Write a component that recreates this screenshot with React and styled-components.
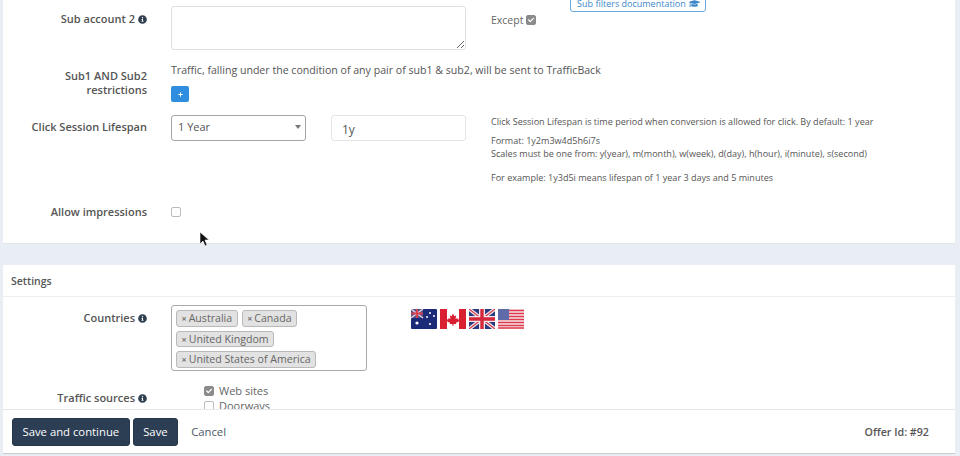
import React from "react";
import styled, { createGlobalStyle } from "styled-components";
import { FaInfoCircle, FaGraduationCap, FaCheck, FaPlus } from "react-icons/fa";

const Global = createGlobalStyle`
  html, body { margin: 0; padding: 0; background: #e9edf4; }
  * { box-sizing: border-box; }
  body { font-family: "Open Sans", "Liberation Sans", sans-serif; color: #555; }
`;

const Page = styled.div`
  width: 960px;
  height: 456px;
  overflow: hidden;
  position: relative;
  display: flex;
  flex-direction: column;
  padding: 0 5px 2px 3px;
  background: #e9edf4;
`;

const Scroll = styled.div`
  flex: 1;
  min-height: 0;
  overflow: hidden;
`;

const Card = styled.section`
  background: #fff;
  border-bottom: 1px solid #e2e5ea;
  height: ${(p) => p.$height}px;
  padding-top: ${(p) => p.$top || 0}px;
  margin-bottom: 21px;
`;

const Row = styled.div`
  display: grid;
  grid-template-columns: 144px 1fr;
  column-gap: 24px;
  margin-top: ${(p) => p.$mt || 0}px;
`;

const Label = styled.div`
  font-size: 11px;
  font-weight: 600;
  line-height: 14px;
  color: #555;
  text-align: right;
  padding-top: ${(p) => p.$pt || 0}px;
  svg { font-size: 9px; color: #2f3f4f; vertical-align: -1px; margin-left: 3px; }
`;

const Control = styled.div`
  display: flex;
  align-items: flex-start;
  min-width: 0;
`;

const Stack = styled.div`
  display: flex;
  flex-direction: column;
  align-items: flex-start;
`;

const TextArea = styled.textarea`
  width: 295px;
  height: 44px;
  border: 1px solid #e0e0e0;
  border-radius: 3px;
  background: #fff;
  display: block;
  outline: none;
`;

const Except = styled.div`
  display: flex;
  align-items: center;
  gap: 3px;
  margin: 8px 0 0 25px;
  font-size: 10.5px;
  line-height: 12px;
  color: #666;
`;

const DocButton = styled.a`
  display: flex;
  align-items: center;
  justify-content: center;
  gap: 3px;
  width: 136px;
  height: 18px;
  margin: -12px 0 0 34px;
  border: 1px solid #6ba6dc;
  border-radius: 3px;
  color: #3d87c9;
  font-size: 9px;
  white-space: nowrap;
  svg { font-size: 11px; flex: none; }
`;

const Note = styled.div`
  font-size: 10.6px;
  line-height: 14px;
  margin-top: 1px;
  color: #555;
`;

const PlusButton = styled.button`
  width: 18px;
  height: 16px;
  margin-top: 9px;
  padding: 0;
  border: 0;
  border-radius: 2px;
  background: #2f8ee0;
  color: #fff;
  display: flex;
  align-items: center;
  justify-content: center;
  svg { font-size: 5px; }
`;

const SelectBox = styled.div`
  position: relative;
  width: 135px;
  height: 26px;
  border: 1px solid #a5a5a5;
  border-radius: 3px;
  padding-left: 6px;
  font-size: 11px;
  line-height: 22px;
  color: #555;
  &::after {
    content: "";
    position: absolute;
    right: 4px;
    top: 9px;
    border-left: 3.5px solid transparent;
    border-right: 3.5px solid transparent;
    border-top: 4px solid #777;
  }
`;

const TextInput = styled.div`
  width: 135px;
  height: 26px;
  margin-left: 25px;
  border: 1px solid #e4e4e4;
  border-radius: 3px;
  padding-left: 10px;
  font-size: 12px;
  line-height: 28px;
  color: #555;
`;

const Help = styled.div`
  margin-left: 25px;
  font-size: 9.05px;
  color: #555;
  line-height: 13px;
  p { margin: 0 0 6px; white-space: nowrap; }
  p:nth-child(2) { margin-bottom: 11px; }
  p:last-child { margin: 0; }
`;

const Box = styled.span`
  width: 10px;
  height: 10px;
  flex: none;
  margin-top: ${(p) => p.$mt || 0}px;
  border-radius: 2px;
  display: inline-flex;
  align-items: center;
  justify-content: center;
  border: 1px solid ${(p) => (p.$checked ? "#8b8b8b" : "#bcbcbc")};
  background: ${(p) => (p.$checked ? "#8b8b8b" : "#fff")};
  color: #fff;
  svg { font-size: 6px; }
`;

const Check = ({ checked, mt }) => (
  <Box $checked={checked} $mt={mt}>
    {checked && <FaCheck />}
  </Box>
);

const CardTitle = styled.div`
  height: 32px;
  padding-left: 8px;
  border-bottom: 1px solid #eceef1;
  font-size: 10.5px;
  font-weight: 600;
  line-height: 32px;
  color: #555;
`;

const TagBox = styled.div`
  width: 196px;
  height: 66px;
  border: 1px solid #aaa;
  border-radius: 3px;
  padding: 4px 4px 0 4px;
  display: flex;
  flex-wrap: wrap;
  align-content: flex-start;
  gap: 4px;
`;

const Tag = styled.span`
  height: 16.5px;
  padding: 0 4.5px;
  border: 1px solid #b9b9b9;
  border-radius: 3px;
  background: #e2e2e2;
  font-size: 10.6px;
  line-height: 15px;
  color: #666;
  white-space: nowrap;
  b { font-weight: 700; font-size: 9px; margin-right: 2px; color: #777; }
`;

const Flags = styled.div`
  display: flex;
  gap: 3px;
  margin: 4px 0 0 44px;
  svg { display: block; width: 26px; height: 20px; }
`;

const Options = styled.div`
  display: flex;
  flex-direction: column;
  margin: -1px 0 0 33px;
`;

const Option = styled.label`
  display: flex;
  align-items: center;
  gap: 5px;
  font-size: 11px;
  line-height: 15px;
  color: #666;
`;

const Footer = styled.footer`
  flex: none;
  height: 45px;
  background: #fff;
  border-top: 1px solid #e6e8ec;
  border-bottom: 1px solid #c9cbcf;
  display: flex;
  align-items: center;
  padding: 0 26px 0 9px;
  gap: 3px;
`;

const SaveButton = styled.button`
  height: 28px;
  padding: 0 9.5px;
  border: 1px solid #26364a;
  border-radius: 3px;
  background: #2c3e54;
  color: #fff;
  font: 400 11.3px "Open Sans", sans-serif;
`;

const CancelLink = styled.a`
  margin-left: 10px;
  font-size: 11.3px;
  color: #4c5a68;
`;

const OfferId = styled.div`
  margin-left: auto;
  font-size: 10.7px;
  font-weight: 600;
  color: #555;
`;

const Cursor = styled.svg`
  position: absolute;
  left: 199px;
  top: 231px;
  width: 11px;
  height: 16px;
`;

const AU = () => (
  <svg viewBox="0 0 26 20">
    <rect width="26" height="20" rx="1" fill="#1c2b78" />
    <rect width="12" height="9" fill="#48508f" />
    <path d="M0 0l12 9M12 0L0 9" stroke="#e8c8d0" strokeWidth="1.5" />
    <path d="M6 0v9M0 4.5h12" stroke="#d8404f" strokeWidth="2" />
    <circle cx="6" cy="14" r="1.6" fill="#fff" />
    <circle cx="19" cy="4" r="1" fill="#fff" />
    <circle cx="23" cy="7" r="1" fill="#fff" />
    <circle cx="16" cy="8" r="1" fill="#fff" />
    <circle cx="19" cy="15" r="1.1" fill="#fff" />
  </svg>
);

const CA = () => (
  <svg viewBox="0 0 26 20">
    <rect width="26" height="20" rx="1" fill="#fff" />
    <rect width="7" height="20" fill="#d92030" />
    <rect x="19" width="7" height="20" fill="#d92030" />
    <path d="M13 4l1.5 3 2-1-.7 4 2-1 .6 1.5 1.6-.2-1 3-2.6.7.2 1.5h-3v2h-1.2v-2h-3l.2-1.5-2.6-.7-1-3 1.6.2.6-1.5 2 1-.7-4 2 1z" fill="#d92030" transform="translate(1.3 1) scale(.9)" />
  </svg>
);

const UK = () => (
  <svg viewBox="0 0 26 20">
    <rect width="26" height="20" rx="1" fill="#2a3a80" />
    <path d="M0 0l26 20M26 0L0 20" stroke="#f2e6ea" strokeWidth="3.6" />
    <path d="M0 0l26 20M26 0L0 20" stroke="#d23a4c" strokeWidth="1.2" />
    <path d="M13 0v20M0 10h26" stroke="#f2e6ea" strokeWidth="6" />
    <path d="M13 0v20M0 10h26" stroke="#d3283c" strokeWidth="3.4" />
  </svg>
);

const US = () => (
  <svg viewBox="0 0 26 20">
    <rect width="26" height="20" rx="1" fill="#f4e6e8" />
    <path d="M0 1.5h26M0 4.5h26M0 7.5h26M0 10.5h26M0 13.5h26M0 16.5h26M0 19h26" stroke="#df3a4c" strokeWidth="1.5" />
    <rect width="11" height="11" fill="#5f6aa8" />
  </svg>
);

export default function App() {
  return (
    <Page>
      <Global />
      <Scroll>
        <Card $height={244} $top={6}>
          <Row>
            <Label $pt={6}>
              Sub account 2
              <FaInfoCircle />
            </Label>
            <Control>
              <TextArea />
              <Except>
                Except <Check checked />
              </Except>
              <DocButton>
                Sub filters documentation <FaGraduationCap />
              </DocButton>
            </Control>
          </Row>
          <Row $mt={12}>
            <Label $pt={7}>Sub1 AND Sub2 restrictions</Label>
            <Stack>
              <Note>Traffic, falling under the condition of any pair of sub1 &amp; sub2, will be sent to TrafficBack</Note>
              <PlusButton>
                <FaPlus />
              </PlusButton>
            </Stack>
          </Row>
          <Row $mt={13}>
            <Label $pt={5}>Click Session Lifespan</Label>
            <Control>
              <SelectBox>1 Year</SelectBox>
              <TextInput>1y</TextInput>
              <Help>
                <p>Click Session Lifespan is time period when conversion is allowed for click. By default: 1 year</p>
                <p>
                  Format: 1y2m3w4d5h6i7s
                  <br />
                  Scales must be one from: y(year), m(month), w(week), d(day), h(hour), i(minute), s(second)
                </p>
                <p>For example: 1y3d5i means lifespan of 1 year 3 days and 5 minutes</p>
              </Help>
            </Control>
          </Row>
          <Row $mt={21}>
            <Label>Allow impressions</Label>
            <Control>
              <Check mt={2} />
            </Control>
          </Row>
        </Card>
        <Card $height={300}>
          <CardTitle>Settings</CardTitle>
          <Row $mt={8}>
            <Label $pt={6}>
              Countries
              <FaInfoCircle />
            </Label>
            <Control>
              <TagBox>
                <Tag><b>×</b>Australia</Tag>
                <Tag><b>×</b>Canada</Tag>
                <Tag><b>×</b>United Kingdom</Tag>
                <Tag><b>×</b>United States of America</Tag>
              </TagBox>
              <Flags>
                <AU />
                <CA />
                <UK />
                <US />
              </Flags>
            </Control>
          </Row>
          <Row $mt={13}>
            <Label $pt={7}>
              Traffic sources
              <FaInfoCircle />
            </Label>
            <Control>
              <Options>
                <Option><Check checked /> Web sites</Option>
                <Option><Check /> Doorways</Option>
              </Options>
            </Control>
          </Row>
        </Card>
      </Scroll>
      <Footer>
        <SaveButton>Save and continue</SaveButton>
        <SaveButton>Save</SaveButton>
        <CancelLink>Cancel</CancelLink>
        <OfferId>Offer Id: #92</OfferId>
      </Footer>
      <Cursor viewBox="0 0 11 16">
        <path d="M1 1v12l3-3 2 5 2-1-2-5h4z" fill="#111" stroke="#fff" strokeWidth=".6" />
      </Cursor>
    </Page>
  );
}
